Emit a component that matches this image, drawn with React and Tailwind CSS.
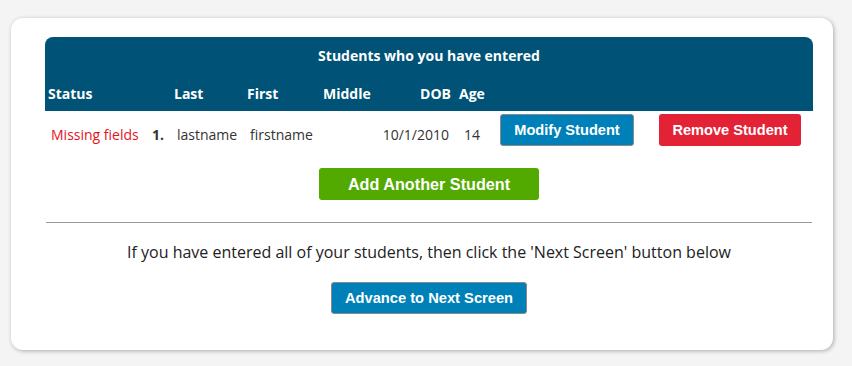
export default function App() {
  const sans = { fontFamily: '"Open Sans", sans-serif' };
  const arial = { fontFamily: '"Liberation Sans", Arial, sans-serif' };
  return (
    <div className="min-h-screen w-full bg-[#f4f4f4] pt-[18px] pl-[11px] pr-[19px]" style={sans}>
      <div className="bg-white rounded-[12px] shadow-[1px_1px_4px_rgba(0,0,0,0.3)] pt-[19px] pl-[34px] pr-[20px] h-[332px]">
        {/* TABLE HEADER */}
        <div className="bg-[#005377] rounded-t-[8px] h-[74px] text-white font-bold">
          <div className="text-center text-[14px] leading-[20px] pt-[9px] h-[38px]">Students who you have entered</div>
          <div className="grid grid-cols-[103px_23px_73px_76px_60px_75px_45px_1fr] text-[14px] items-center h-[36px]">
            <div className="pl-[3px]">Status</div>
            <div></div>
            <div className="pl-[3px]">Last</div>
            <div className="pl-[3px]">First</div>
            <div className="pl-[3px]">Middle</div>
            <div className="text-right pr-[4px]">DOB</div>
            <div className="pl-[4px]">Age</div>
            <div></div>
          </div>
        </div>

        {/* STUDENT ROW */}
        <div className="grid grid-cols-[103px_23px_73px_76px_60px_75px_45px_1fr] text-[14px] leading-[20px] text-[#333] items-center h-[45px] pt-[2px]">
          <div className="pl-[6px] text-[#e8101e]">Missing fields</div>
          <div className="pl-[4px] font-bold">1.</div>
          <div className="pl-[6px]">lastname</div>
          <div className="pl-[6px]">firstname</div>
          <div></div>
          <div className="text-right pr-[6px]">10/1/2010</div>
          <div className="pl-[9px]">14</div>
          <div className="flex items-center gap-[25px] -mt-[9px]" style={arial}>
            <button className="w-[134px] h-[32px] rounded-[3px] bg-[#0080b8] border border-[#8a8a8a] text-white font-bold text-[14.6px]">
              Modify Student
            </button>
            <button className="w-[142px] h-[32px] rounded-[3px] bg-[#e32236] text-white font-bold text-[14.6px]">
              Remove Student
            </button>
          </div>
        </div>

        {/* ADD */}
        <div className="flex justify-center pt-[12px]" style={arial}>
          <button className="w-[220px] h-[32px] rounded-[3px] bg-[#52aa00] text-white font-bold text-[16.2px]">
            Add Another Student
          </button>
        </div>

        <div className="mt-[22px] mx-[1px] border-t border-[#999]"></div>

        <p className="text-center text-[16px] leading-[24px] text-[#222] mt-[17px]">
          If you have entered all of your students, then click the 'Next Screen' button below
        </p>

        <div className="flex justify-center mt-[18px]" style={arial}>
          <button className="w-[196px] h-[32px] rounded-[3px] bg-[#0080b8] border border-[#8a8a8a] text-white font-bold text-[14.7px]">
            Advance to Next Screen
          </button>
        </div>
      </div>
    </div>
  );
}
